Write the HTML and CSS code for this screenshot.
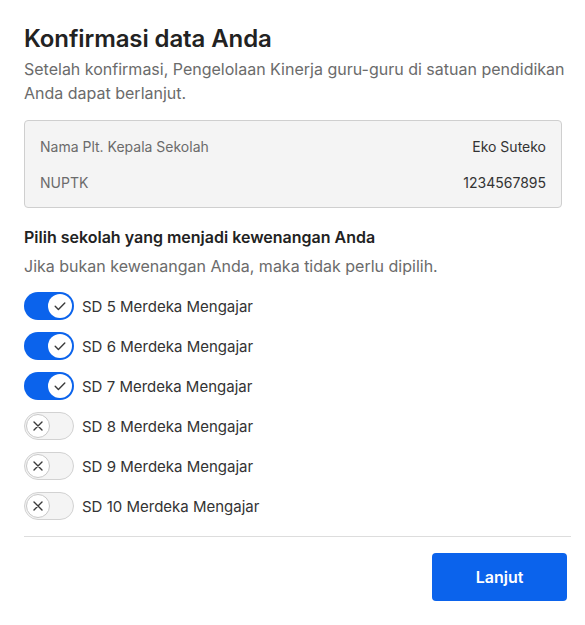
FILE: index.html
```html
<!DOCTYPE html>
<html lang="id">
<head>
<meta charset="utf-8">
<title>Konfirmasi data Anda</title>
<link rel="stylesheet" href="styles.css">
</head>
<body>
<div class="page">
  <h1 class="title">Konfirmasi data Anda</h1>
  <p class="desc">Setelah konfirmasi, Pengelolaan Kinerja guru-guru di satuan pendidikan Anda dapat berlanjut.</p>

  <div class="info">
    <div class="info-row"><span class="info-label">Nama Plt. Kepala Sekolah</span><span class="info-value">Eko Suteko</span></div>
    <div class="info-row"><span class="info-label">NUPTK</span><span class="info-value">1234567895</span></div>
  </div>

  <h2 class="subhead">Pilih sekolah yang menjadi kewenangan Anda</h2>
  <p class="desc small-gap">Jika bukan kewenangan Anda, maka tidak perlu dipilih.</p>

  <ul class="list">
    <li class="item"><span class="toggle on"><span class="knob"><svg viewBox="0 0 16 16" width="16" height="16"><path d="M3.2 8.3l3.2 3.2 6.4-6.6" fill="none" stroke="#3a3a3a" stroke-width="1.4" stroke-linecap="round" stroke-linejoin="round"/></svg></span></span><span class="label">SD 5 Merdeka Mengajar</span></li>
    <li class="item"><span class="toggle on"><span class="knob"><svg viewBox="0 0 16 16" width="16" height="16"><path d="M3.2 8.3l3.2 3.2 6.4-6.6" fill="none" stroke="#3a3a3a" stroke-width="1.4" stroke-linecap="round" stroke-linejoin="round"/></svg></span></span><span class="label">SD 6 Merdeka Mengajar</span></li>
    <li class="item"><span class="toggle on"><span class="knob"><svg viewBox="0 0 16 16" width="16" height="16"><path d="M3.2 8.3l3.2 3.2 6.4-6.6" fill="none" stroke="#3a3a3a" stroke-width="1.4" stroke-linecap="round" stroke-linejoin="round"/></svg></span></span><span class="label">SD 7 Merdeka Mengajar</span></li>
    <li class="item"><span class="toggle off"><span class="knob"><svg viewBox="0 0 16 16" width="16" height="16"><path d="M4 4l8 8M12 4l-8 8" fill="none" stroke="#3a3a3a" stroke-width="1.4" stroke-linecap="round"/></svg></span></span><span class="label">SD 8 Merdeka Mengajar</span></li>
    <li class="item"><span class="toggle off"><span class="knob"><svg viewBox="0 0 16 16" width="16" height="16"><path d="M4 4l8 8M12 4l-8 8" fill="none" stroke="#3a3a3a" stroke-width="1.4" stroke-linecap="round"/></svg></span></span><span class="label">SD 9 Merdeka Mengajar</span></li>
    <li class="item"><span class="toggle off"><span class="knob"><svg viewBox="0 0 16 16" width="16" height="16"><path d="M4 4l8 8M12 4l-8 8" fill="none" stroke="#3a3a3a" stroke-width="1.4" stroke-linecap="round"/></svg></span></span><span class="label">SD 10 Merdeka Mengajar</span></li>
  </ul>

  <div class="divider"></div>
  <div class="actions"><button class="btn" type="button">Lanjut</button></div>
</div>
</body>
</html>
```

FILE: styles.css
```css
* { box-sizing: border-box; }
html, body { margin: 0; padding: 0; background: #fff; }
body { font-family: "Inter", "Noto Sans", sans-serif; color: #222; }
.page { width: 571px; padding: 23px 0 0 24px; }
.title { margin: 0; font-size: 24px; line-height: 32px; font-weight: 600; color: #222; letter-spacing: -0.1px; }
.desc { margin: 2px 0 0; font-size: 16px; line-height: 24px; color: #6b6b6b; width: 547px; }
.desc.small-gap { margin-top: 5px; }
.info { margin-top: 15px; width: 538px; background: #f4f4f4; border: 1px solid #cfcfcf; border-radius: 4px; padding: 7px 15px; }
.info-row { display: flex; justify-content: space-between; align-items: center; height: 36px; font-size: 14px; }
.info-label { color: #6b6b6b; }
.info-value { color: #333; }
.subhead { margin: 17px 0 0; font-size: 16px; line-height: 24px; font-weight: 600; color: #222; }
.list { list-style: none; margin: 14px 0 0; padding: 0; display: flex; flex-direction: column; gap: 12px; }
.item { display: flex; align-items: center; gap: 8px; height: 28px; }
.toggle { position: relative; width: 50px; height: 28px; border-radius: 14px; display: flex; align-items: center; padding: 2px; flex: none; }
.toggle.on { background: #0b63ec; justify-content: flex-end; }
.toggle.off { background: #f4f4f4; border: 1px solid #d2d2d2; padding: 1px; }
.knob { width: 24px; height: 24px; border-radius: 50%; background: #fff; display: flex; align-items: center; justify-content: center; }
.toggle.off .knob { border: 1px solid #c8c8c8; }
.label { font-size: 15px; color: #333; }
.divider { margin-top: 16px; height: 1px; background: #ddd; width: 547px; }
.actions { display: flex; justify-content: flex-end; width: 543px; margin-top: 16px; }
.btn { width: 135px; height: 48px; border: none; border-radius: 4px; background: #0b63ec; color: #fff; font-family: inherit; font-size: 16px; font-weight: 600; }
```
